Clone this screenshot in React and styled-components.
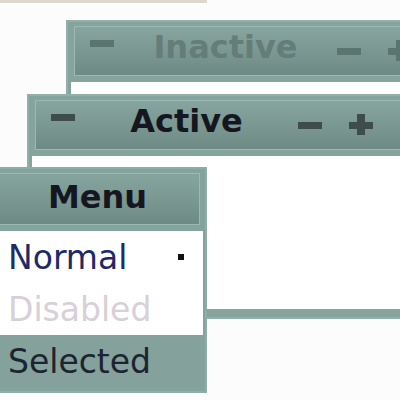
import React from 'react';
import styled, { createGlobalStyle } from 'styled-components';

const GlobalStyle = createGlobalStyle`
  * { box-sizing: border-box; }
  html, body { margin: 0; background: #fcfcfc; }
  body { font-family: "DejaVu Sans", sans-serif; }
`;

const Desktop = styled.div`
  position: relative;
  width: 400px;
  height: 400px;
  overflow: hidden;
  background: #fcfcfc;
`;

// bottom of something that sits above the preview
const Shelf = styled.div`
  width: 207px;
  height: 3px;
  background: #dcd8cf;
`;

// windows on the desktop keep their own spot
const Frame = styled.div`
  position: absolute;
  left: ${p => p.x}px;
  top: ${p => p.y}px;
  width: ${p => p.w}px;
  display: flex;
  flex-direction: column;
  background: #86a49e;
  border: 2px solid #92b0aa;
`;

const TitleBar = styled.div`
  padding: 4px 6px 6px;
`;

const TitleLabel = styled.div`
  height: ${p => p.h || 50}px;
  display: flex;
  align-items: center;
  padding: 0 ${p => p.pr || 15}px 0 15px;
  border: 1px solid #9bb8b2;
  background: linear-gradient(#87a59f, #6e8a84);
`;

const TitleText = styled.div`
  flex: 1;
  text-align: center;
  font-size: 32px;
  font-weight: bold;
  padding-bottom: ${p => p.lift || 9}px;
  color: ${p => (p.active ? '#15161f' : '#647d78')};
  white-space: nowrap;
`;

const Button = styled.svg`
  width: 24px;
  height: 24px;
  flex: none;
  fill: ${p => (p.active ? '#3e4c4a' : '#5a7470')};
  & + & {
    margin-left: 27px;
  }
`;

const Client = styled.div`
  background: #ffffff;
  height: ${p => p.h}px;
  margin: 0 3px 8px;
`;

const MenuFrame = styled.div`
  position: absolute;
  left: -12px;
  top: 167px;
  width: 219px;
  background: #85a39d;
  border: 2px solid #8fada7;
`;

const MenuTitle = styled.div`
  padding: 4px 5px 6px;
`;

const Items = styled.div`
  background: #ffffff;
  margin: 0 2px 4px;
`;

const Item = styled.div`
  height: 52px;
  display: flex;
  align-items: center;
  justify-content: space-between;
  padding: 0 19px 0 16px;
  font-size: 33px;
  white-space: nowrap;
  color: ${p => p.color};
  background: ${p => p.bg || 'transparent'};
`;

const Bullet = styled.span`
  width: 6px;
  height: 6px;
  background: #111111;
`;

const Shade = ({ active }) => (
  <Button active={active} viewBox="0 0 24 24">
    <rect x="0" y="1" width="24" height="7" />
  </Button>
);

const Iconify = ({ active }) => (
  <Button active={active} viewBox="0 0 24 24">
    <rect x="0" y="9" width="24" height="7" />
  </Button>
);

const Maximize = ({ active }) => (
  <Button active={active} viewBox="0 0 24 24">
    <rect x="0" y="9" width="24" height="7" />
    <rect x="8" y="1" width="8" height="21" />
  </Button>
);

const Window = ({ title, active, x, y, w, pr, clientH }) => (
  <Frame x={x} y={y} w={w}>
    <TitleBar>
      <TitleLabel pr={pr}>
        <Shade active={active} />
        <TitleText active={active}>{title}</TitleText>
        <Iconify active={active} />
        <Maximize active={active} />
      </TitleLabel>
    </TitleBar>
    <Client h={clientH} />
  </Frame>
);

const Menu = () => (
  <MenuFrame>
    <MenuTitle>
      <TitleLabel h={52}>
        <TitleText active lift={5}>Menu</TitleText>
      </TitleLabel>
    </MenuTitle>
    <Items>
      <Item color="#1d2a68">
        Normal
        <Bullet />
      </Item>
      <Item color="#d7d0d8">Disabled</Item>
      <Item color="#1d2431" bg="#84a19b">Selected</Item>
    </Items>
  </MenuFrame>
);

const App = () => (
  <Desktop>
    <GlobalStyle />
    <Shelf />
    <Window title="Inactive" x={66} y={20} w={370} clientH={200} />
    <Window title="Active" active x={27} y={94} w={400} pr={45} clientH={153} />
    <Menu />
  </Desktop>
);

export default App;
